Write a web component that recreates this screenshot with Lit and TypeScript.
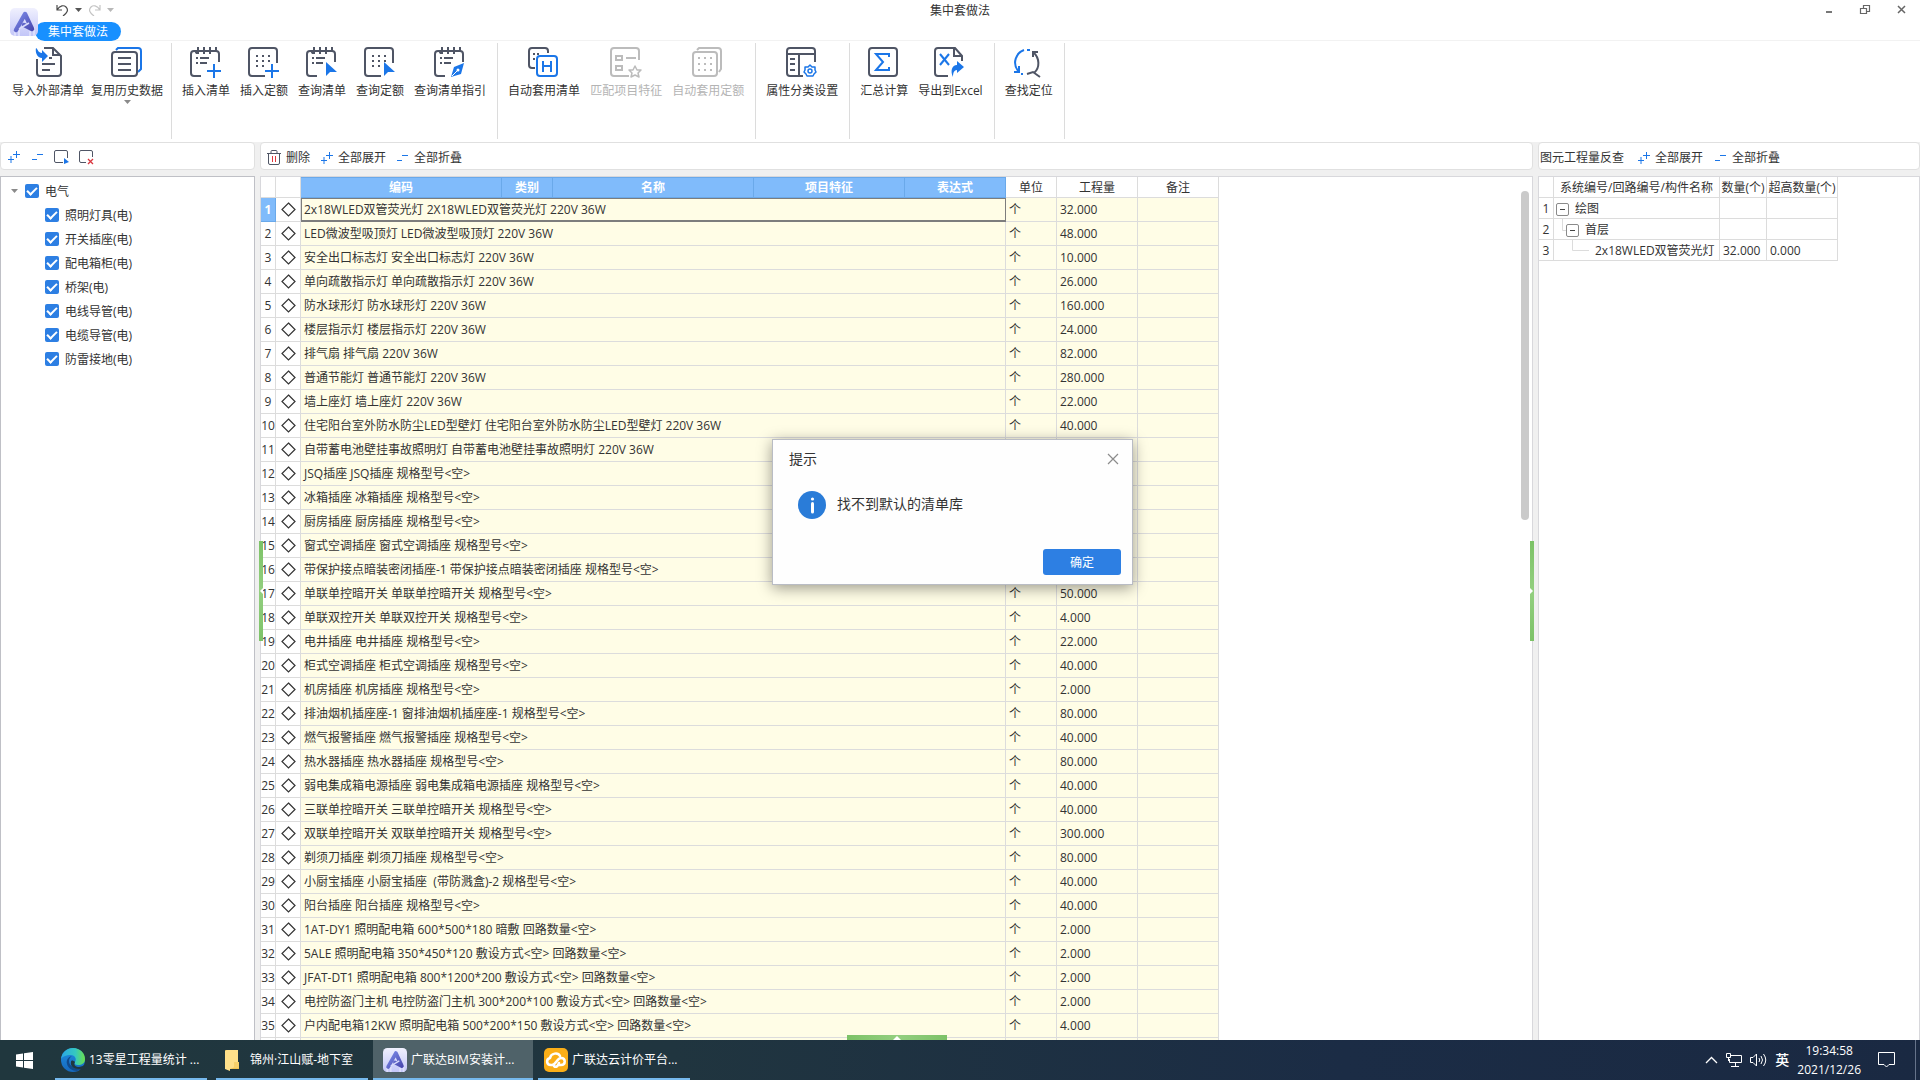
import { LitElement, html, svg, css, nothing } from "lit";
import { customElement } from "lit/decorators.js";
import { classMap } from "lit/directives/class-map.js";

const DARK = "#4f5565";
const BLUE = "#1b76e8";
const GREY = "#bcbcbc";

const notebook = svg`
  <path d="M11 30H4a3 3 0 0 1-3-3V8a3 3 0 0 1 3-3H26a3 3 0 0 1 3 3V16" fill="none" stroke=${DARK} stroke-width="2"/>
  <path d="M8 1V8M14 1V8M20 1V8M26 1V5" stroke=${DARK} stroke-width="2"/>
  <path d="M4 5H9V8H6Z" fill=${DARK}/>
  <path d="M6 12H8M10 12H19M6 17H8M10 17H17" stroke=${DARK} stroke-width="2"/>`;

const dotSheet = svg`
  <path d="M17 30H4a3 3 0 0 1-3-3V5a3 3 0 0 1 3-3H26a3 3 0 0 1 3 3V17" fill="none" stroke=${DARK} stroke-width="2"/>
  <path d="M8 10H22M8 15H22M8 20H16" stroke=${DARK} stroke-width="2" stroke-dasharray="2 4"/>`;

const plus = svg`<path d="M24 18V32M17 25H31" stroke=${BLUE} stroke-width="2"/>`;
const cursor = svg`<path d="M20 16L31 26H24L20 30Z" fill=${BLUE}/>`;

const ICONS: Record<string, unknown> = {
  import: svg`
    <path d="M5 13V27a3 3 0 0 0 3 3H26a3 3 0 0 0 3-3V10L21 2H12" fill="none" stroke=${DARK} stroke-width="2"/>
    <path d="M21 3V9H28" fill="none" stroke=${DARK} stroke-width="2"/>
    <path d="M17 12H20M10 18H23M10 24H18" stroke=${DARK} stroke-width="2"/>
    <path d="M4 2C6 3 6 7 10 7V4L16 10L10 16V12C5 12 3 6 4 2Z" fill=${BLUE}/>`,
  history: svg`
    <path d="M5 4L7 2H27a3 3 0 0 1 3 3V23L27 26" fill="none" stroke=${BLUE} stroke-width="2"/>
    <rect x="1" y="6" width="25" height="24" rx="3" fill="#fff" stroke=${DARK} stroke-width="2"/>
    <path d="M7 12H20M7 18H20M7 24H20" stroke=${DARK} stroke-width="2"/>`,
  listAdd: svg`${notebook}${plus}`,
  quotaAdd: svg`${dotSheet}${plus}`,
  listFind: svg`${notebook}${cursor}`,
  quotaFind: svg`${dotSheet}${cursor}`,
  listGuide: svg`${notebook}
    <path d="M30 17L27 28L17 31L20 21Z" fill=${BLUE}/>
    <path d="M18 30L24 24" stroke="#fff" stroke-width="1"/><circle cx="24" cy="24" r="1.5" fill="#fff"/>`,
  autoList: svg`
    <path d="M7 22H4a3 3 0 0 1-3-3V5a3 3 0 0 1 3-3H17a3 3 0 0 1 3 3V7" fill="none" stroke=${DARK} stroke-width="2"/>
    <path d="M5 8H7M5 13H7M9 8H11" stroke=${DARK} stroke-width="2"/>
    <rect x="9" y="10" width="20" height="20" rx="3" fill="#fff" stroke=${BLUE} stroke-width="2"/>
    <path d="M15 15V26M23 15V26M15 20H23" fill="none" stroke=${BLUE} stroke-width="2"/>`,
  match: svg`
    <path d="M19 30H4a3 3 0 0 1-3-3V5a3 3 0 0 1 3-3H26a3 3 0 0 1 3 3V14" fill="none" stroke=${GREY} stroke-width="2"/>
    <path d="M6 10H12V14H6ZM6 20H12V24H6ZM16 12H26" fill="none" stroke=${GREY} stroke-width="2"/>
    <path d="M25 20L27 24L31 24L28 27L29 31L25 29L21 31L22 27L19 24L23 24Z" fill="none" stroke=${GREY} stroke-width="1.5" stroke-linejoin="round"/>`,
  autoQuota: svg`
    <path d="M5 4L7 2H26a3 3 0 0 1 3 3V23L27 26" fill="none" stroke=${GREY} stroke-width="2"/>
    <rect x="1" y="6" width="24" height="24" rx="3" fill="#fff" stroke=${GREY} stroke-width="2"/>
    <path d="M6 12H20M6 18H20M6 24H20" stroke=${GREY} stroke-width="2" stroke-dasharray="2 4"/>`,
  props: svg`
    <path d="M17 30H4a3 3 0 0 1-3-3V5a3 3 0 0 1 3-3H26a3 3 0 0 1 3 3V16M1 8H29M13 8V30" fill="none" stroke=${DARK} stroke-width="2"/>
    <path d="M4 13H9M4 18H9M4 24H9" stroke=${DARK} stroke-width="2"/>
    <path d="M24 19L26 21L29 21L29 24L30 26L28 28L27 30L24 30L21 30L20 28L18 26L19 24L19 21L22 21Z" fill="none" stroke=${BLUE} stroke-width="1.5" stroke-linejoin="round"/>
    <circle cx="24" cy="25" r="2" fill="none" stroke=${BLUE} stroke-width="1.5"/>`,
  sum: svg`
    <rect x="1" y="2" width="28" height="28" rx="3" fill="none" stroke=${DARK} stroke-width="2"/>
    <path d="M21 11V8H8L15 16L8 24H21V21" fill="none" stroke=${BLUE} stroke-width="2"/>`,
  excel: svg`
    <path d="M14 30H4a3 3 0 0 1-3-3V5a3 3 0 0 1 3-3H21L28 10V15" fill="none" stroke=${DARK} stroke-width="2"/>
    <path d="M20 2V10H28" fill="none" stroke=${DARK} stroke-width="2"/>
    <path d="M6 8L15 19M15 8L6 19" stroke=${BLUE} stroke-width="2"/>
    <path d="M23 15L30 21L23 27V24C20 24 19 27 19 31C16 25 18 19 23 19Z" fill=${BLUE}/>`,
  locate: svg`
    <path d="M11 4C3 7 -1 17 5 25" fill="none" stroke=${BLUE} stroke-width="2"/>
    <path d="M1 26H6V20" fill="none" stroke=${BLUE} stroke-width="2"/>
    <path d="M14 4H17M8 28H10" stroke=${BLUE} stroke-width="2"/>
    <path d="M20 6C27 12 27 22 21 27M14 28L20 26L27 31" fill="none" stroke=${DARK} stroke-width="2"/>
    <path d="M20 11V6H25" fill="none" stroke=${DARK} stroke-width="2"/>`,
};

interface Tool { label: string; icon: string; off?: boolean; menu?: boolean }

const RIBBON: Tool[][] = [
  [{ label: "导入外部清单", icon: "import" }, { label: "复用历史数据", icon: "history", menu: true }],
  [
    { label: "插入清单", icon: "listAdd" },
    { label: "插入定额", icon: "quotaAdd" },
    { label: "查询清单", icon: "listFind" },
    { label: "查询定额", icon: "quotaFind" },
    { label: "查询清单指引", icon: "listGuide" },
  ],
  [
    { label: "自动套用清单", icon: "autoList" },
    { label: "匹配项目特征", icon: "match", off: true },
    { label: "自动套用定额", icon: "autoQuota", off: true },
  ],
  [{ label: "属性分类设置", icon: "props" }],
  [{ label: "汇总计算", icon: "sum" }, { label: "导出到Excel", icon: "excel" }],
  [{ label: "查找定位", icon: "locate" }],
];

const TREE = ["照明灯具(电)", "开关插座(电)", "配电箱柜(电)", "桥架(电)", "电线导管(电)", "电缆导管(电)", "防雷接地(电)"];

const ROWS: [string, string][] = [
  ["2x18WLED双管荧光灯 2X18WLED双管荧光灯 220V 36W", "32.000"],
  ["LED微波型吸顶灯 LED微波型吸顶灯 220V 36W", "48.000"],
  ["安全出口标志灯 安全出口标志灯 220V 36W", "10.000"],
  ["单向疏散指示灯 单向疏散指示灯 220V 36W", "26.000"],
  ["防水球形灯 防水球形灯 220V 36W", "160.000"],
  ["楼层指示灯 楼层指示灯 220V 36W", "24.000"],
  ["排气扇 排气扇 220V 36W", "82.000"],
  ["普通节能灯 普通节能灯 220V 36W", "280.000"],
  ["墙上座灯 墙上座灯 220V 36W", "22.000"],
  ["住宅阳台室外防水防尘LED型壁灯 住宅阳台室外防水防尘LED型壁灯 220V 36W", "40.000"],
  ["自带蓄电池壁挂事故照明灯 自带蓄电池壁挂事故照明灯 220V 36W", ""],
  ["JSQ插座 JSQ插座 规格型号<空>", ""],
  ["冰箱插座 冰箱插座 规格型号<空>", ""],
  ["厨房插座 厨房插座 规格型号<空>", ""],
  ["窗式空调插座 窗式空调插座 规格型号<空>", ""],
  ["带保护接点暗装密闭插座-1 带保护接点暗装密闭插座 规格型号<空>", ""],
  ["单联单控暗开关 单联单控暗开关 规格型号<空>", "50.000"],
  ["单联双控开关 单联双控开关 规格型号<空>", "4.000"],
  ["电井插座 电井插座 规格型号<空>", "22.000"],
  ["柜式空调插座 柜式空调插座 规格型号<空>", "40.000"],
  ["机房插座 机房插座 规格型号<空>", "2.000"],
  ["排油烟机插座座-1 窗排油烟机插座座-1 规格型号<空>", "80.000"],
  ["燃气报警插座 燃气报警插座 规格型号<空>", "40.000"],
  ["热水器插座 热水器插座 规格型号<空>", "80.000"],
  ["弱电集成箱电源插座 弱电集成箱电源插座 规格型号<空>", "40.000"],
  ["三联单控暗开关 三联单控暗开关 规格型号<空>", "40.000"],
  ["双联单控暗开关 双联单控暗开关 规格型号<空>", "300.000"],
  ["剃须刀插座 剃须刀插座 规格型号<空>", "80.000"],
  ["小厨宝插座 小厨宝插座  (带防溅盒)-2 规格型号<空>", "40.000"],
  ["阳台插座 阳台插座 规格型号<空>", "40.000"],
  ["1AT-DY1 照明配电箱 600*500*180 暗敷 回路数量<空>", "2.000"],
  ["5ALE 照明配电箱 350*450*120 敷设方式<空> 回路数量<空>", "2.000"],
  ["JFAT-DT1 照明配电箱 800*1200*200 敷设方式<空> 回路数量<空>", "2.000"],
  ["电控防盗门主机 电控防盗门主机 300*200*100 敷设方式<空> 回路数量<空>", "2.000"],
  ["户内配电箱12KW 照明配电箱 500*200*150 敷设方式<空> 回路数量<空>", "4.000"],
];

const expandIcon = html`<svg width="12" height="12" viewBox="0 0 12 12"><path d="M8.500 0V7M5 3.500H12M3 5V12M0 8.500H6" stroke=${BLUE} fill="none"/></svg>`;
const collapseIcon = html`<svg width="12" height="12" viewBox="0 0 12 12"><path d="M5 3.500H11M0 8.500H5" stroke=${BLUE} fill="none"/></svg>`;

const appLogo = (id: string) => html`
  <svg class="logo" viewBox="0 0 28 28">
    <defs>
      <linearGradient id="${id}bg" x1="0" y1="0" x2="0" y2="1"><stop offset="0" stop-color="#f0f0fe"/><stop offset="1" stop-color="#c3c6f8"/></linearGradient>
      <linearGradient id="${id}fg" x1="0" y1="0" x2="1" y2="1"><stop offset="0" stop-color="#7b8ae8"/><stop offset="1" stop-color="#4a49b0"/></linearGradient>
    </defs>
    <rect width="28" height="28" rx="5" fill="url(#${id}bg)"/>
    <path d="M5 28V21M9 28V22M20 28V23M24 28V19" stroke="#dcdefc" stroke-width="2"/>
    <path d="M6 22L15 6L22 21L14 17" fill="none" stroke="url(#${id}fg)" stroke-width="4.500" stroke-linejoin="round" stroke-linecap="round"/>
    <path d="M9 21L19 15" stroke="#d9dbfb" stroke-width="1.500"/>
  </svg>`;

@customElement("app-root")
export class AppRoot extends LitElement {
  static styles = css`
    :host {
      display: flex;
      flex-direction: column;
      height: 100vh;
      overflow: hidden;
      position: relative;
      background: #fff;
      color: #333;
      font: 12px/16px "Open Sans", "Noto Sans CJK SC", sans-serif;
    }
    * { box-sizing: border-box; }
    svg { display: block; flex: none; }
    button { font: inherit; color: inherit; background: none; border: 0; padding: 0; display: flex; align-items: center; white-space: nowrap; }

    .titlebar { display: grid; grid-template-columns: 1fr auto 1fr; height: 41px; border-bottom: 1px solid #f2f2f2; flex: none; }
    .brand { display: flex; padding: 8px 0 0 10px; }
    .brand .logo { width: 28px; height: 28px; position: relative; z-index: 1; }
    .brand-side { display: flex; flex-direction: column; gap: 6px; margin: -4px 0 0 -3px; }
    .quick { display: flex; gap: 4px; padding-left: 21px; height: 12px; }
    .quick button { gap: 6px; width: 28px; }
    .tab { height: 19px; width: 86px; justify-content: center; border-radius: 10px; background: #1890ff; color: #fff; }
    .caption { margin: 0; font: inherit; padding-top: 3px; }
    .winbtns { display: flex; justify-content: flex-end; align-items: flex-start; padding: 4px 13px 0 0; gap: 24px; }

    .ribbon { display: flex; height: 101px; flex: none; }
    .group { display: flex; gap: 10px; height: 96px; margin-top: 2px; padding: 3px 11px 0 10px; border-right: 1px solid #dcdcdc; align-items: flex-start; }
    .group:first-child { padding: 3px 8px 0 12px; gap: 7px; }
    .tool { flex-direction: column; gap: 5px; }
    .tool.off { color: #b4b4b4; }
    .tool .caret { margin-top: -4px; }

    .body { flex: 1; min-height: 0; display: grid; grid-template-columns: 255px 5px minmax(0, 1fr) 5px 382px; background: #f0f0f0; }
    .col { display: flex; flex-direction: column; gap: 6px; min-height: 0; min-width: 0; position: relative; }
    .bar { display: flex; align-items: center; height: 28px; flex: none; background: #fff; border: 1px solid #e0e0e0; border-radius: 4px; padding-top: 3px; }
    .bar button { gap: 5px; }
    .bar-tree { padding-left: 7px; gap: 10px; padding-top: 2px; }
    .pair { display: flex; gap: 12px; }
    .bar-main { padding-left: 6px; gap: 11px; }
    .bar-check { padding-left: 1px; gap: 12px; }
    .bar-check .name { margin-right: 2px; }
    .pane { flex: 1; min-height: 0; overflow: hidden; background: #fff; border: 1px solid #d8d8dc; border-bottom: 0; }
    .pane.tree { border-color: #bfc0c6; padding-top: 2px; }

    ul { list-style: none; margin: 0; padding: 0; }
    .node { display: flex; align-items: center; height: 24px; gap: 6px; padding-left: 24px; position: relative; }
    ul ul .node { padding-left: 44px; }
    .node .caret { margin: 0 1px 0 -14px; }
    .node label { padding-top: 1px; }
    .node input { appearance: none; width: 14px; height: 14px; margin: 0; background: #2d7fe3; border-radius: 2px; display: grid; place-items: center; }
    .node input::before { content: ""; width: 8px; height: 4px; border: solid #fff; border-width: 0 0 2px 2px; transform: rotate(-45deg); margin-bottom: 3px; }

    table { border-collapse: separate; border-spacing: 0; table-layout: fixed; }
    th, td { padding: 0; font-weight: 400; border: solid #dcdcdc; border-width: 0 1px 1px 0; overflow: hidden; white-space: pre; line-height: 18px; }
    th { text-align: center; padding-top: 2px; }
    .grid { width: 958px; }
    .grid thead tr { height: 21px; }
    .grid tbody tr { height: 24px; }
    .grid tbody td { background: #fffde6; padding: 0 3px; }
    .grid tbody .num, .grid tbody .mark { background: #fff; padding: 0; text-align: center; }
    .grid tbody .num { padding-top: 1px; }
    .grid thead .on { background: #80bbfb; border-color: #6aa9ea; color: #fff; font-weight: 700; box-shadow: inset 0 1px #6aa9ea; }
    .grid tbody .num.on { background: #80bbfb; border-color: #6aa9ea; color: #fff; font-weight: 700; }
    .grid .sel td.main { outline: 1px solid #7d7d7d; outline-offset: -1px; box-shadow: inset 0 -1px #7d7d7d; }
    .mark svg { margin: auto; }
    .thumb { position: absolute; right: 4px; top: 49px; width: 8px; height: 329px; border-radius: 4px; background: #cacaca; }

    .check { width: 299px; }
    .check tr { height: 21px; }
    .check td { padding: 2px 3px 0; }
    .check .num { text-align: center; padding: 2px 0 0; }
    .branch { display: flex; align-items: center; gap: 6px; height: 18px; margin-left: -1px; }
    .branch.d2, .branch.d3 { padding-left: 6px; }
    .stem { display: flex; align-items: center; }
    .box { width: 13px; height: 13px; border: 1px solid #8a8a8a; border-radius: 2px; justify-content: center; flex: none; }
    .box::before { content: ""; width: 5px; height: 1px; background: #444; }

    .split { position: relative; display: flex; align-items: center; z-index: 2; }
    .grip { width: 4px; height: 100px; flex: none; background: linear-gradient(#7cc267, #93cf80, #7cc267); justify-content: center; }
    .split.left .grip { margin-left: 4px; }
    .split.right .grip { margin-left: -3px; }
    .grip.flat { position: absolute; bottom: 0; left: 50%; margin-left: -50px; width: 100px; height: 5px; background: linear-gradient(90deg, #7cc267, #93cf80, #7cc267); }

    .dialog { position: absolute; left: 772px; top: 439px; z-index: 5; width: 361px; margin: 0; padding: 0; border: 1px solid #b9bcc4; background: #fefefe; color: #333; box-shadow: 0 3px 14px rgba(0, 0, 0, 0.4); font-size: 14px; line-height: 20px; display: block; }
    .dlg-head { display: flex; justify-content: space-between; align-items: center; padding: 9px 13px 0 16px; }
    .dlg-head h2 { margin: 0; font: inherit; }
    .dlg-body { display: flex; align-items: center; gap: 11px; padding: 22px 25px 0; }
    .dlg-body p { margin: 0; padding-bottom: 2px; }
    .dlg-foot { display: flex; justify-content: flex-end; padding: 30px 11px 9px; }
    .ok { width: 78px; height: 26px; justify-content: center; padding-top: 2px; border-radius: 3px; background: #2d7fe3; color: #fff; font-size: 12px; }

    .taskbar { display: flex; height: 40px; flex: none; background: linear-gradient(90deg, #20373e, #20353f 35%, #1b2c45 70%, #1a2942); color: #fff; }
    .start { width: 55px; padding-left: 16px; }
    .tasks { display: flex; gap: 9px; flex: 1; }
    .task { width: 152px; padding: 0 0 0 6px; gap: 4px; border-bottom: 2px solid #76b9ed; border-top: 2px solid transparent; }
    .task.folder { gap: 10px; padding-left: 9px; }
    .task.active { width: 160px; margin: 0 -4px; padding-left: 10px; background: #4f6269; border-top-color: #4f6269; }
    .task .logo { width: 24px; height: 24px; }
    .tray { display: flex; align-items: center; gap: 8px; }
    .ime { font-size: 14px; font-weight: 500; line-height: 20px; }
    .clock { text-align: center; line-height: 19px; margin: 0 9px 0 0; }
    .desk { width: 5px; height: 40px; border-left: 1px solid #66738a; margin-left: 12px; }
  `;

  private caret(color = "#8a8a8a") {
    return html`<svg class="caret" width="7" height="4" viewBox="0 0 7 4"><path d="M0 0H7L3.500 4Z" fill=${color}/></svg>`;
  }

  private titlebar() {
    return html`
      <header class="titlebar">
        <div class="brand">
          ${appLogo("top")}
          <div class="brand-side">
            <div class="quick">
              <button aria-label="撤销">
                <svg width="13" height="12" viewBox="0 0 13 12"><path d="M1 1V6H6M1 6C4 1 8 1 10 3C13 6 11 9 7 12" fill="none" stroke="#4a4a4a" stroke-width="1.200"/></svg>
                ${this.caret("#555")}
              </button>
              <button aria-label="重做">
                <svg width="13" height="12" viewBox="0 0 13 12"><path d="M12 1V6H7M12 6C9 1 5 1 3 3C0 6 2 9 6 12" fill="none" stroke="#c4c4c4" stroke-width="1.200"/></svg>
                ${this.caret("#b8b8b8")}
              </button>
            </div>
            <button class="tab">集中套做法</button>
          </div>
        </div>
        <h1 class="caption">集中套做法</h1>
        <div class="winbtns">
          <button aria-label="最小化"><svg width="12" height="12" viewBox="0 0 12 12"><path d="M3 8H9" stroke="#777" stroke-width="2"/></svg></button>
          <button aria-label="还原"><svg width="12" height="12" viewBox="0 0 12 12"><path d="M4.500 4V1.500H10.500V7.500H8M1.500 4.500H7.500V9.500H1.500Z" fill="none" stroke="#666" stroke-width="1.200"/></svg></button>
          <button aria-label="关闭"><svg width="12" height="12" viewBox="0 0 12 12"><path d="M3 2L10 9M10 2L3 9" stroke="#666" stroke-width="1.500"/></svg></button>
        </div>
      </header>`;
  }

  private ribbon() {
    return html`
      <nav class="ribbon">
        ${RIBBON.map((g) => html`
          <div class="group">
            ${g.map((t) => html`
              <button class=${classMap({ tool: true, off: !!t.off })} ?disabled=${!!t.off}>
                <svg width="32" height="32" viewBox="0 0 32 32">${ICONS[t.icon]}</svg>
                <span>${t.label}</span>
                ${t.menu ? this.caret() : nothing}
              </button>`)}
          </div>`)}
      </nav>`;
  }

  private tree() {
    return html`
      <section class="col">
        <div class="bar bar-tree">
          <div class="pair">
            <button aria-label="展开">${expandIcon}</button>
            <button aria-label="折叠">${collapseIcon}</button>
          </div>
          <button aria-label="全选"><svg width="15" height="14" viewBox="0 0 15 14"><path d="M9 12.500H2a1.500 1.500 0 0 1-1.500-1.500V2A1.500 1.500 0 0 1 2 .5H12A1.500 1.500 0 0 1 13.500 2V8" fill="none" stroke=${DARK}/><path d="M10 8L15 12L10 14Z" fill=${BLUE}/></svg></button>
          <button aria-label="取消选择"><svg width="15" height="15" viewBox="0 0 15 15"><path d="M7 12.500H2a1.500 1.500 0 0 1-1.500-1.500V2A1.500 1.500 0 0 1 2 .5H12A1.500 1.500 0 0 1 13.500 2V7" fill="none" stroke=${DARK}/><path d="M9 9L14 14M14 9L9 14" stroke="#d9363e" stroke-width="1.300"/></svg></button>
        </div>
        <div class="pane tree">
          <ul>
            <li>
              <div class="node">${this.caret()}<input type="checkbox" id="root" checked /><label for="root">电气</label></div>
              <ul>
                ${TREE.map((t, i) => html`<li class="node"><input type="checkbox" id="n${i}" checked /><label for="n${i}">${t}</label></li>`)}
              </ul>
            </li>
          </ul>
        </div>
      </section>`;
  }

  private diamond() {
    return html`<svg width="15" height="15" viewBox="0 0 15 15"><path d="M7.500 1L14 7.500L7.500 14L1 7.500Z" fill="#fff" stroke="#333" stroke-width="1.200"/></svg>`;
  }

  private main() {
    return html`
      <section class="col">
        <div class="bar bar-main">
          <button>
            <svg width="14" height="16" viewBox="0 0 14 16"><path d="M0 3.500H14M4 3V1.500Q4 .5 5 .5H9Q10 .5 10 1.500V3M1.500 4V13a1.500 1.500 0 0 0 1.500 1.500H11A1.500 1.500 0 0 0 12.500 13V4" fill="none" stroke=${DARK}/><path d="M5.500 6V12M8.500 6V12" stroke="#e0393e"/></svg>
            删除
          </button>
          <button>${expandIcon}全部展开</button>
          <button>${collapseIcon}全部折叠</button>
        </div>
        <div class="pane">
          <table class="grid">
            <colgroup>${[15, 25, 201, 51, 201, 151, 101, 51, 81, 81].map((w) => html`<col width=${w} />`)}</colgroup>
            <thead>
              <tr>
                <th></th><th></th>
                ${["编码", "类别", "名称", "项目特征", "表达式"].map((h) => html`<th class="on" scope="col">${h}</th>`)}
                ${["单位", "工程量", "备注"].map((h) => html`<th scope="col">${h}</th>`)}
              </tr>
            </thead>
            <tbody>
              ${ROWS.map(([name, qty], i) => html`
                <tr class=${i === 0 ? "sel" : ""}>
                  <td class=${i === 0 ? "num on" : "num"}>${i + 1}</td>
                  <td class="mark">${this.diamond()}</td>
                  <td class="main" colspan="5">${name}</td>
                  <td>${qty ? "个" : ""}</td>
                  <td>${qty}</td>
                  <td></td>
                </tr>`)}
              <tr><td class="num"></td><td class="mark"></td><td colspan="5"></td><td></td><td></td><td></td></tr>
            </tbody>
          </table>
        </div>
        <div class="thumb"></div>
        <button class="grip flat" aria-label="展开下方面板"><svg width="8" height="4" viewBox="0 0 8 4"><path d="M0 4L4 0L8 4Z" fill="#fff"/></svg></button>
      </section>`;
  }

  private check() {
    return html`
      <section class="col">
        <div class="bar bar-check">
          <span class="name">图元工程量反查</span>
          <button>${expandIcon}全部展开</button>
          <button>${collapseIcon}全部折叠</button>
        </div>
        <div class="pane">
          <table class="check">
            <colgroup><col width="15" /><col width="166" /><col width="47" /><col width="71" /></colgroup>
            <thead><tr><th></th><th scope="col">系统编号/回路编号/构件名称</th><th scope="col">数量(个)</th><th scope="col">超高数量(个)</th></tr></thead>
            <tbody>
              <tr>
                <td class="num">1</td>
                <td><div class="branch"><button class="box" aria-label="折叠"></button>绘图</div></td>
                <td></td><td></td>
              </tr>
              <tr>
                <td class="num">2</td>
                <td><div class="branch d2"><div class="stem"><svg width="4" height="22" viewBox="0 0 4 22"><path d="M.5 0V11.500H4" fill="none" stroke="#dcdcdc"/></svg><button class="box" aria-label="折叠"></button></div>首层</div></td>
                <td></td><td></td>
              </tr>
              <tr>
                <td class="num">3</td>
                <td><div class="branch d3"><svg width="27" height="22" viewBox="0 0 27 22"><path d="M10.500 0V10.500H27" fill="none" stroke="#dcdcdc"/></svg>2x18WLED双管荧光灯</div></td>
                <td>32.000</td><td>0.000</td>
              </tr>
            </tbody>
          </table>
        </div>
      </section>`;
  }

  private dialog() {
    return html`
      <dialog class="dialog" open aria-labelledby="dlg-title">
        <div class="dlg-head">
          <h2 id="dlg-title">提示</h2>
          <button aria-label="关闭"><svg width="12" height="12" viewBox="0 0 12 12"><path d="M1 1L11 11M11 1L1 11" stroke="#8c8c8c" stroke-width="1.200"/></svg></button>
        </div>
        <div class="dlg-body">
          <svg width="28" height="28" viewBox="0 0 28 28"><circle cx="14" cy="14" r="14" fill="#2a7cd8"/><circle cx="14.500" cy="8" r="1.600" fill="#fff"/><path d="M14.500 12.500V21" stroke="#fff" stroke-width="3" stroke-linecap="round"/></svg>
          <p>找不到默认的清单库</p>
        </div>
        <div class="dlg-foot"><button class="ok">确定</button></div>
      </dialog>`;
  }

  private taskbar() {
    return html`
      <footer class="taskbar">
        <button class="start" aria-label="开始"><svg width="17" height="17" viewBox="0 0 17 17"><path d="M0 2.500L7 1.500V8H0ZM8 1.300L17 0V8H8ZM0 9H7V15.500L0 14.500ZM8 9H17V17L8 15.700Z" fill="#fff"/></svg></button>
        <div class="tasks">
          <button class="task">
            <svg width="24" height="24" viewBox="0 0 24 24">
              <defs>
                <linearGradient id="e1" x1="0" y1="0" x2="1" y2="0"><stop offset="0" stop-color="#2aa6e6"/><stop offset="0.600" stop-color="#35c8c0"/><stop offset="1" stop-color="#6be04a"/></linearGradient>
                <linearGradient id="e2" x1="0" y1="0" x2="0" y2="1"><stop offset="0" stop-color="#1f8fe0"/><stop offset="1" stop-color="#1668bd"/></linearGradient>
              </defs>
              <circle cx="12" cy="12" r="12" fill="url(#e2)"/>
              <path d="M0 11C1 4 6 0 12 0C19 0 24 5 24 11C24 15 21 17 17 17C14 17 13 16 14 14C16 11 14 7 10 7C5 7 1 9 0 11Z" fill="url(#e1)"/>
              <path d="M8 13C8 11 9 9 11 8C7 9 5 12 6 16C7 20 11 23 16 23C19 22 21 20 22 18C15 21 8 19 8 13Z" fill="#114a8b"/>
              <path d="M14 14C12 17 15 19 18 19C20 19 22 18 23 17L24 20L21 22L18 21C13 21 9 18 10 14C10 12 12 12 14 14Z" fill="#20363f"/>
            </svg>
            13零星工程量统计 ...
          </button>
          <button class="task folder">
            <svg width="15" height="22" viewBox="0 0 15 22"><path d="M0 2Q0 1 1 1H12V16L14 16V20H0Z" fill="#f1c453"/><path d="M2 1H13V17L5 20V22L0 20V2Z" fill="#ffe08a"/><path d="M9 13H14V19H9Z" fill="#f7d06a"/></svg>
            锦州·江山赋-地下室
          </button>
          <button class="task active">${appLogo("task")}广联达BIM安装计...</button>
          <button class="task">
            <svg width="24" height="24" viewBox="0 0 24 24"><rect width="24" height="24" rx="5" fill="#fbae17"/><path d="M10 17H7C2 17 2 11 6 10C7 5 14 4 16 8M14 17H17C22 17 22 10 17 10C13 10 12 17 8 17M10 18C12 20 14 18 15 15" fill="none" stroke="#fff" stroke-width="2.500" stroke-linecap="round"/></svg>
            广联达云计价平台...
          </button>
        </div>
        <div class="tray">
          <svg width="13" height="8" viewBox="0 0 13 8"><path d="M1 7L6.500 1.500L12 7" fill="none" stroke="#fff" stroke-width="1.300"/></svg>
          <svg width="16" height="14" viewBox="0 0 16 14"><path d="M5 2.500H15.500V9.500H3.500V6M9.500 10V13M5 13.500H13M.5 1V4.500H4.500V.5H.5ZM2.500 5V8" fill="none" stroke="#fff"/></svg>
          <svg width="17" height="14" viewBox="0 0 17 14"><path d="M.5 4.500H3L6.500 1V13L3 9.500H.5ZM9 5Q10.500 7 9 9M11 3Q14 7 11 11M13.500 1Q18 7 13.500 13" fill="none" stroke="#fff"/></svg>
          <span class="ime">英</span>
          <div class="clock">19:34:58<br />2021/12/26</div>
          <svg width="17" height="16" viewBox="0 0 17 16"><path d="M.5 .5H16.500V12.500H11L8.500 15L6 12.500H.5Z" fill="none" stroke="#fff"/></svg>
          <div class="desk"></div>
        </div>
      </footer>`;
  }

  render() {
    return html`
      ${this.titlebar()} ${this.ribbon()}
      <main class="body">
        ${this.tree()}
        <div class="split left"><button class="grip" aria-label="收起左侧"><svg width="4" height="6" viewBox="0 0 4 6"><path d="M4 0L1 3L4 6Z" fill="#fff"/></svg></button></div>
        ${this.main()}
        <div class="split right"><button class="grip" aria-label="收起右侧"><svg width="4" height="6" viewBox="0 0 4 6"><path d="M0 0L3 3L0 6Z" fill="#fff"/></svg></button></div>
        ${this.check()}
      </main>
      ${this.dialog()} ${this.taskbar()}
    `;
  }
}
